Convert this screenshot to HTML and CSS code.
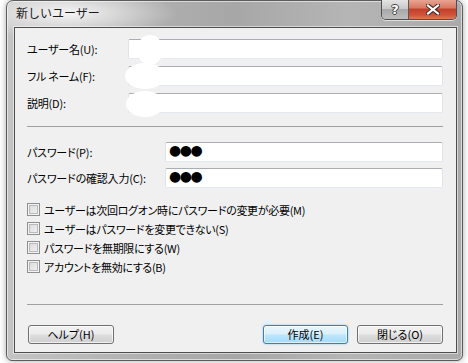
FILE: index.html
```html
<!DOCTYPE html>
<html lang="ja">
<head>
<meta charset="utf-8">
<link rel="stylesheet" href="styles.css">
</head>
<body>
<div class="window">
  <div class="titlebar">
    <span class="title">新しいユーザー</span>
    <div class="caps">
      <div class="cap cap-help"><span class="qmark">?</span></div>
      <div class="cap cap-close">
        <svg width="14" height="11" viewBox="0 0 14 11">
          <path d="M2 1.5 L12 9.5 M12 1.5 L2 9.5" stroke="#3a2a2a" stroke-width="4.2" stroke-linecap="square" fill="none"/>
          <path d="M2 1.5 L12 9.5 M12 1.5 L2 9.5" stroke="#ffffff" stroke-width="2.2" stroke-linecap="square" fill="none"/>
        </svg>
      </div>
    </div>
  </div>
  <div class="client">
    <div class="grid grid-a">
      <label class="lbl">ユーザー名(U):</label><div class="field"><span class="blob b1"></span></div>
      <label class="lbl">フル ネーム(F):</label><div class="field"><span class="blob b2"></span></div>
      <label class="lbl">説明(D):</label><div class="field"><span class="blob b3"></span></div>
    </div>
    <div class="sep sep1"></div>
    <div class="grid grid-b">
      <label class="lbl">パスワード(P):</label><div class="field"><span class="dots">●●●</span></div>
      <label class="lbl">パスワードの確認入力(C):</label><div class="field"><span class="dots">●●●</span></div>
    </div>
    <div class="checks">
      <div class="chk"><span class="box"></span><span>ユーザーは次回ログオン時にパスワードの変更が必要(M)</span></div>
      <div class="chk"><span class="box"></span><span>ユーザーはパスワードを変更できない(S)</span></div>
      <div class="chk"><span class="box"></span><span>パスワードを無期限にする(W)</span></div>
      <div class="chk"><span class="box"></span><span>アカウントを無効にする(B)</span></div>
    </div>
    <div class="sep sep2"></div>
    <div class="buttons">
      <div class="btn btn-help">ヘルプ(H)</div>
      <div class="spacer"></div>
      <div class="btn btn-default">作成(E)</div>
      <div class="btn">閉じる(O)</div>
    </div>
  </div>
</div>
</body>
</html>
```

FILE: styles.css
```css
* { box-sizing: border-box; }
html, body { margin: 0; padding: 0; }
body {
  background: #ffffff;
  width: 468px;
  height: 363px;
  overflow: hidden;
  font-family: "Noto Sans CJK JP", "Noto Sans", sans-serif;
  font-feature-settings: "palt";
  font-size: 11px;
  color: #000;
}
.window {
  margin-left: 6px;
  width: 457px;
  height: 361px;
  border: 1px solid #5c5c5c;
  border-radius: 7px 7px 6px 6px;
  box-shadow: 0 0 6px rgba(0,0,0,0.35), inset 0 0 0 1px rgba(255,255,255,0.55);
  background:
    radial-gradient(ellipse 110px 26px at 60px 12px, rgba(255,255,255,0.85), rgba(255,255,255,0) 100%),
    linear-gradient(to right, #c4c4c4 0%, #b0b0b0 30%, #a7a7a7 50%, #b5b5b5 75%, #aaaaaa 100%);
  padding: 0 5px 0 7px;
  display: flex;
  flex-direction: column;
}
.titlebar {
  height: 26px;
  display: flex;
  align-items: flex-start;
  position: relative;
}
.title {
  flex: 1;
  padding-left: 2px;
  padding-top: 4px;
  font-size: 12px;
  font-feature-settings: normal;
  color: #1a1a1a;
  line-height: 16px;
}
.caps {
  display: flex;
  margin-top: -1px;
  border: 1px solid #4f4f4f;
  border-top: none;
  border-radius: 0 0 5px 5px;
  overflow: hidden;
  box-shadow: 0 1px 0 rgba(255,255,255,0.6);
}
.cap {
  height: 19px;
  display: flex;
  align-items: center;
  justify-content: center;
}
.cap-help {
  width: 27px;
  border-right: 1px solid #5a5a5a;
  background: linear-gradient(to bottom, #e4e4e4 0%, #c9c9c9 45%, #a9a9a9 50%, #bdbdbd 100%);
}
.qmark {
  font-family: "DejaVu Sans", sans-serif;
  font-weight: bold;
  font-size: 13px;
  color: #fff;
  line-height: 1;
  text-shadow: 1px 0 0 #444, -1px 0 0 #444, 0 1px 0 #444, 0 -1px 0 #444;
}
.cap-close {
  width: 47px;
  background: linear-gradient(to bottom, #e8a592 0%, #d87962 40%, #c2412a 50%, #d2533a 80%, #e2775a 100%);
}
.client {
  background: #f0f0f0;
  border: 1px solid #4e4e4e;
  box-shadow: 0 0 0 1px rgba(255,255,255,0.5);
  padding: 11px 13px 8px 12px;
  display: flex;
  flex-direction: column;
}
.grid {
  display: grid;
  align-items: center;
}
.grid-a {
  grid-template-columns: 101px 315px;
  row-gap: 7px;
}
.grid-b {
  grid-template-columns: 138px 278px;
  row-gap: 6px;
  margin-top: 15px;
}
.lbl {
  font-size: 11px;
  letter-spacing: -0.2px;
  line-height: 16px;
  white-space: nowrap;
}
.field {
  position: relative;
  height: 20px;
  background: #fff;
  border: 1px solid #e2e3ea;
  border-top-color: #abadb3;
  border-bottom-color: #e3e9ef;
  border-radius: 2px;
  padding-left: 3px;
}
.blob {
  position: absolute;
  background: #fff;
  border-radius: 50%;
}
.b1 { left: 8px; top: -5px; width: 26px; height: 30px; }
.b2 { left: -4px; top: -4px; width: 40px; height: 26px; }
.b3 { left: -3px; top: -3px; width: 38px; height: 26px; }
.dots {
  font-family: "DejaVu Sans", sans-serif;
  font-size: 14px;
  line-height: 14px;
  letter-spacing: -1.5px;
  display: block;
}
.sep {
  height: 1px;
  background: #a0a0a0;
}
.sep1 { margin-top: 13px; }
.sep2 { margin-top: 28px; }
.checks {
  margin-top: 12px;
  display: flex;
  flex-direction: column;
}
.chk {
  height: 19px;
  display: flex;
  align-items: center;
  gap: 4px;
  font-size: 11px;
  letter-spacing: -0.3px;
  white-space: nowrap;
}
.box {
  width: 13px;
  height: 13px;
  border: 1px solid #8e8f8f;
  box-shadow: inset 0 0 0 1px #f4f4f4, inset 0 0 0 2px #b9b9b9;
  background-image: linear-gradient(135deg, #d8d8d8, #f4f4f4);
  flex: none;
}
.buttons {
  margin-top: 20px;
  display: flex;
  gap: 9px;
}
.spacer { flex: 1; }
.btn {
  width: 86px;
  height: 19px;
  border: 1px solid #707070;
  border-radius: 3px;
  background: linear-gradient(to bottom, #f2f2f2 0%, #ebebeb 48%, #dddddd 52%, #cfcfcf 100%);
  box-shadow: inset 0 0 0 1px rgba(255,255,255,0.7);
  font-size: 11px;
  line-height: 17px;
  text-align: center;
}
.btn-help { margin-left: 1px; }
.btn-default {
  width: 85px;
  border-color: #3c7fb1;
  background: linear-gradient(to bottom, #eaf6fd 0%, #d9f0fc 48%, #bee6fd 52%, #a7d9f5 100%);
  box-shadow: inset 0 0 0 1px rgba(255,255,255,0.6), 0 0 2px rgba(60,160,230,0.6);
}
```
